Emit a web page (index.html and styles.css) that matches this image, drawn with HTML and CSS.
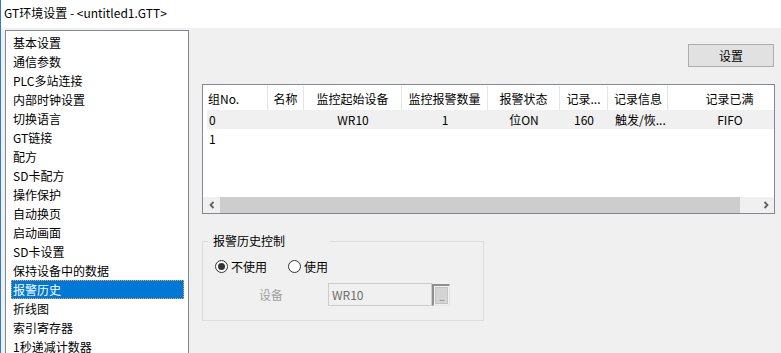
FILE: index.html
```html
<!DOCTYPE html>
<html lang="zh-CN">
<head>
<meta charset="utf-8">
<title>GT环境设置</title>
<link rel="stylesheet" href="styles.css">
</head>
<body>
<div class="window">
  <div class="titlebar">GT环境设置 - &lt;untitled1.GTT&gt;</div>
  <div class="main">
    <ul class="nav">
      <li>基本设置</li>
      <li>通信参数</li>
      <li>PLC多站连接</li>
      <li>内部时钟设置</li>
      <li>切换语言</li>
      <li>GT链接</li>
      <li>配方</li>
      <li>SD卡配方</li>
      <li>操作保护</li>
      <li>自动换页</li>
      <li>启动画面</li>
      <li>SD卡设置</li>
      <li>保持设备中的数据</li>
      <li class="selected">报警历史</li>
      <li>折线图</li>
      <li>索引寄存器</li>
      <li>1秒递减计数器</li>
    </ul>
    <div class="content">
      <div class="toolbar"><button class="btn">设置</button></div>
      <div class="listview">
        <div class="lv-head">
          <div class="cell c1 left">组No.</div>
          <div class="cell c2">名称</div>
          <div class="cell c3">监控起始设备</div>
          <div class="cell c4">监控报警数量</div>
          <div class="cell c5">报警状态</div>
          <div class="cell c6">记录...</div>
          <div class="cell c7 left">记录信息</div>
          <div class="cell c8">记录已满</div>
        </div>
        <div class="lv-body">
          <div class="lv-row alt">
            <div class="cell c1 left">0</div>
            <div class="cell c2"></div>
            <div class="cell c3">WR10</div>
            <div class="cell c4">1</div>
            <div class="cell c5">位ON</div>
            <div class="cell c6">160</div>
            <div class="cell c7 left">触发/恢...</div>
            <div class="cell c8">FIFO</div>
          </div>
          <div class="lv-row">
            <div class="cell c1 left">1</div>
          </div>
        </div>
        <div class="hscroll">
          <div class="sb-btn"><svg width="8" height="8" viewBox="0 0 8 8"><path d="M5.5 1 L2.5 4 L5.5 7" fill="none" stroke="#606060" stroke-width="1.8"/></svg></div>
          <div class="sb-thumb"></div>
          <div class="sb-track"></div>
          <div class="sb-btn"><svg width="8" height="8" viewBox="0 0 8 8"><path d="M2.5 1 L5.5 4 L2.5 7" fill="none" stroke="#606060" stroke-width="1.8"/></svg></div>
        </div>
      </div>
      <fieldset class="group">
        <legend>报警历史控制</legend>
        <div class="radio-row">
          <label class="radio"><span class="circle checked"><span class="dot"></span></span>不使用</label>
          <label class="radio"><span class="circle"></span>使用</label>
        </div>
        <div class="device-row">
          <span class="dev-label">设备</span>
          <span class="dev-input">WR10</span>
          <span class="dots"><span class="dots-face">...</span></span>
        </div>
      </fieldset>
    </div>
  </div>
</div>
</body>
</html>
```

FILE: styles.css
```css
* { box-sizing: border-box; }
html, body {
  margin: 0;
  padding: 0;
  width: 781px;
  height: 353px;
  overflow: hidden;
  background: #f0f0f0;
  font-family: "Noto Sans CJK SC", "Noto Sans", sans-serif;
  font-size: 12px;
  color: #000;
}
.window {
  height: 353px;
  border-left: 1px solid #2b79d0;
  display: flex;
  flex-direction: column;
}
.titlebar {
  height: 28px;
  line-height: 25px;
  padding-left: 3px;
  background: #fff;
  flex: none;
}
.main {
  display: flex;
  flex: 1;
  min-height: 0;
}
.nav {
  list-style: none;
  margin: 2px 0 0 4px;
  padding: 2px 4px 0 5px;
  width: 184px;
  height: 340px;
  background: #fff;
  border: 1px solid #828790;
  flex: none;
}
.nav li {
  height: 19px;
  line-height: 19px;
  padding-left: 2px;
  white-space: nowrap;
}
.nav li.selected {
  background: #0078d7;
  color: #fff;
  outline: 1px dotted #f7a64a;
  outline-offset: -1px;
}
.content {
  flex: 1;
  padding: 16px 0 0 13px;
  display: flex;
  flex-direction: column;
}
.toolbar {
  display: flex;
  justify-content: flex-end;
  padding-right: 7px;
}
.btn {
  width: 86px;
  height: 23px;
  background: #e1e1e1;
  border: 1px solid #adadad;
  font-family: inherit;
  font-size: 12px;
  padding: 0;
  color: #000;
}
.listview {
  margin-top: 17px;
  width: 573px;
  height: 130px;
  background: #fff;
  border: 1px solid #828790;
  display: flex;
  flex-direction: column;
  overflow: hidden;
}
.lv-head, .lv-row {
  display: grid;
  grid-template-columns: 65px 36px 98px 86px 72px 48px 60px 124px;
  white-space: nowrap;
}
.lv-head {
  height: 25px;
  line-height: 25px;
  padding-top: 1px;
  flex: none;
}
.lv-head .cell {
  border-right: 1px solid #e5e5e5;
  height: 24px;
}
.cell {
  text-align: center;
  overflow: hidden;
}
.cell.left { text-align: left; }
.lv-head .c1 { padding-left: 5px; }
.lv-head .c7 { padding-left: 6px; }
.lv-body {
  flex: 1;
}
.lv-row {
  height: 19px;
  line-height: 19px;
  margin-left: 4px;
  grid-template-columns: 61px 36px 98px 86px 72px 48px 60px 124px;
}
.lv-row.alt { background: #f0f0f0; }
.lv-row .c1 { padding-left: 2px; }
.lv-row .c7 { padding-left: 7px; }
.hscroll {
  height: 16px;
  display: flex;
  flex: none;
  background: #f0f0f0;
}
.sb-btn {
  width: 17px;
  display: flex;
  align-items: center;
  justify-content: center;
  flex: none;
}
.sb-thumb {
  width: 520px;
  background: #cdcdcd;
  flex: none;
}
.sb-track { flex: 1; }
.group {
  margin: 19px 0 0 0;
  width: 282px;
  border: 1px solid #dcdcdc;
  padding: 0 0 14px 0;
}
.group legend {
  width: 122px;
  padding: 0 0 0 5px;
  margin-left: 5px;
  line-height: 16px;
}
.radio-row {
  display: flex;
  align-items: center;
  height: 16px;
  margin-top: 9px;
  padding-left: 12px;
}
.radio {
  display: flex;
  align-items: center;
  margin-right: 21px;
}
.circle {
  width: 13px;
  height: 13px;
  border-radius: 50%;
  border: 1px solid #333;
  background: #fff;
  margin-right: 3px;
  display: flex;
  align-items: center;
  justify-content: center;
}
.dot {
  width: 7px;
  height: 7px;
  border-radius: 50%;
  background: #333;
}
.device-row {
  display: flex;
  align-items: center;
  margin-top: 9px;
  height: 23px;
  padding-left: 12px;
}
.dev-label {
  width: 113px;
  padding-left: 44px;
  color: #a0a0a0;
  flex: none;
}
.dev-input {
  width: 104px;
  height: 23px;
  line-height: 21px;
  border: 1px solid #cccccc;
  background: #f0f0f0;
  color: #6d6d6d;
  padding-left: 3px;
}
.dots {
  width: 18px;
  height: 22px;
  border-top: 2px solid #8f8f8f;
  border-left: 2px solid #8f8f8f;
  border-right: 1px solid #e6e6e6;
  border-bottom: 1px solid #e6e6e6;
  padding: 1px;
  display: flex;
}
.dots-face {
  flex: 1;
  background: #d4d4d4;
  border: 1px solid #c4c4c4;
  color: #8a8a8a;
  font-size: 9px;
  line-height: 9px;
  display: flex;
  align-items: flex-end;
  justify-content: center;
  padding-bottom: 1px;
  letter-spacing: -1px;
}
```
